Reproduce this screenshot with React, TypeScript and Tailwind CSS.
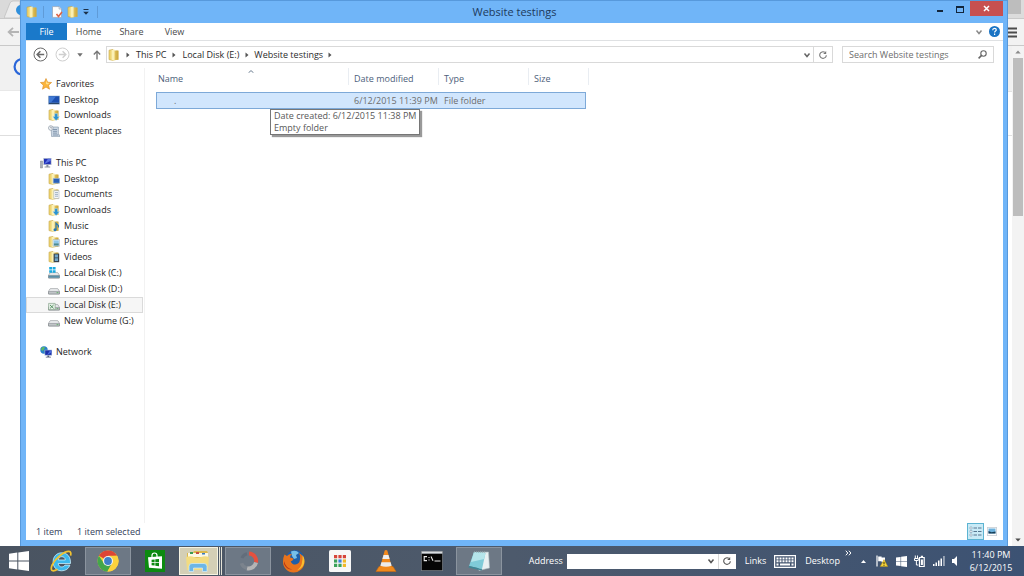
import React, { useState } from 'react';

type IconProps = { className?: string };

const FolderIcon: React.FC<{ className?: string; children?: React.ReactNode }> = ({ className = 'w-3 h-3', children }) => (
  <svg className={`shrink-0 ${className}`} viewBox="0 0 12 12">
    <path d="M1 1.2 5 .4v11L1 10.6z" fill="#efd573" stroke="#c5a544" strokeWidth=".6" />
    <path d="M5 1.4h4.6v9.4L5 11.6z" fill="#dcbc55" />
    <path d="M3.6 1 6.6.6v10.6l-3 .4z" fill="#fbf0b4" />
    <path d="M8.400 1.600h2.200v9.200H8.400z" fill="#cfab42" />
    {children}
  </svg>
);

const DiskIcon: React.FC<{ children?: React.ReactNode }> = ({ children }) => (
  <svg className="w-3 h-3 shrink-0" viewBox="0 0 12 12">
    <path d="M2.2 5.6h7.6L12 8.4v2.2q0 .8-.8.8H.8q-.8 0-.8-.8V8.4z" fill="#7f8488" />
    <path d="M2.4 6h7.2l1.8 2.3H.6z" fill="#e4e6e8" />
    <path d="M.6 8.6h10.8v2.1H.6z" fill="#c0c4c7" />
    <path d="M8.6 9.3h1.8v.8H8.6z" fill="#4fae58" />
    {children}
  </svg>
);

const StarIcon = () => (
  <svg className="w-3 h-3 shrink-0" viewBox="0 0 12 12">
    <path d="m6 .5 1.6 3.7 4 .3-3 2.7.9 4L6 9.1l-3.5 2.1.9-4-3-2.7 4-.3z" fill="#fbb53c" stroke="#d98a1e" strokeWidth=".6" />
    <path d="m6 2 1 2.8 2.5.2-2 1.6L6 6z" fill="#ffe08a" />
  </svg>
);

const DesktopIcon = () => (
  <svg className="w-3 h-3 shrink-0" viewBox="0 0 12 12">
    <path d="M.3 1.8h11.4v8.6H.3z" fill="#5d83b5" />
    <path d="M1 2.4h10v6.2H1z" fill="#1c4fb0" />
    <path d="M1 2.4h7L3 8.6H1z" fill="#3f78d4" />
    <path d="M1 9h10v.9H1z" fill="#24405f" />
  </svg>
);

const RecentIcon = () => (
  <svg className="w-3 h-3 shrink-0" viewBox="0 0 12 12">
    <path d="M3 2h7.4v8H12v1.6H3.6z" fill="#cbd7e4" stroke="#8293a6" strokeWidth=".6" />
    <path d="M5 4.5h4M5 6.3h4M5 8.1h4M5 10h5" stroke="#7086a0" strokeWidth=".8" />
    <circle cx="2.8" cy="3" r="2.3" fill="#f4f6f8" stroke="#8b97a5" strokeWidth=".7" />
    <path d="M2.8 1.6V3H4" fill="none" stroke="#6b7785" strokeWidth=".6" />
  </svg>
);

const PcIcon = () => (
  <svg className="w-3 h-3 shrink-0" viewBox="0 0 12 12">
    <path d="M.3 4h2.2v7H.3z" fill="#a9afb8" stroke="#70777f" strokeWidth=".4" />
    <path d="M3.2 1h8.4v7H3.2z" fill="#b9c2d3" />
    <path d="M4 1.8h6.8v5.4H4z" fill="#2130b4" />
    <path d="m4 7.2 4-5.4h2.8v2z" fill="#5c74e4" />
    <path d="M6.4 8h2v1.6h1.8v1H4.6v-1h1.8z" fill="#8c93a0" />
  </svg>
);

const NetworkIcon = () => (
  <svg className="w-3 h-3 shrink-0" viewBox="0 0 12 12">
    <circle cx="4" cy="4" r="3.7" fill="#2a82c9" />
    <path d="M2 1.2 5 1 4 3.4 2.4 5 1 3.6zM4.5 4.4l2 .2L5 7.2z" fill="#5dbb63" />
    <path d="M4.6 3.8H12v5.8H4.6z" fill="#9fb0d6" />
    <path d="M5.2 4.4h6.2v4.5H5.2z" fill="#1b2fa8" />
    <path d="m7 8.9 3-4.5h1.4v2z" fill="#4b6be0" />
    <path d="M7.4 9.6h1.8v1.2H11v.8H5.8v-.8h1.6z" fill="#555f78" />
  </svg>
);

const DownArrow = () => <path d="M6.6 4.6h3v3h2L8.1 11.8 4.6 7.6h2z" fill="#2b93d1" stroke="#e7f4fb" strokeWidth=".4" />;

const Chevron: React.FC<IconProps> = ({ className = '' }) => (
  <svg className={`w-2 h-2 shrink-0 ${className}`} viewBox="0 0 8 8">
    <path d="m1.5 2.5 2.5 3 2.5-3" fill="none" stroke="currentColor" strokeWidth="1.5" />
  </svg>
);

const Refresh: React.FC<IconProps> = ({ className = '' }) => (
  <svg className={`w-[10px] h-[10px] shrink-0 ${className}`} viewBox="0 0 10 10">
    <path d="M6.800 2.300A3.300 3.300 0 1 0 8.300 5.200" fill="none" stroke="currentColor" strokeWidth="1.100" />
    <path d="M8.200.900v3H5.200z" fill="currentColor" />
  </svg>
);

const RightTriangle = () => (
  <svg className="w-1 h-[6px] shrink-0" viewBox="0 0 4 6">
    <path d="M.5.5 3.5 3l-3 2.5z" fill="#555" />
  </svg>
);

type Place = { label: string; icon: React.ReactNode; root?: boolean; active?: boolean } | null;

const places: Place[] = [
  { label: 'Favorites', icon: <StarIcon />, root: true },
  { label: 'Desktop', icon: <DesktopIcon /> },
  { label: 'Downloads', icon: <FolderIcon><DownArrow /></FolderIcon> },
  { label: 'Recent places', icon: <RecentIcon /> },
  null,
  { label: 'This PC', icon: <PcIcon />, root: true },
  { label: 'Desktop', icon: <FolderIcon><path d="M5.2 5.4h6.5v4.8H5.2z" fill="#2b62b8" stroke="#a8c3e6" strokeWidth=".6" /></FolderIcon> },
  { label: 'Documents', icon: <FolderIcon><path d="M5.8 2.6H11v8H5.8z" fill="#f5f7f9" stroke="#9aa7b3" strokeWidth=".5" /><path d="M7 4.6h3M7 6.4h3M7 8.2h3" stroke="#8097ad" strokeWidth=".7" /></FolderIcon> },
  { label: 'Downloads', icon: <FolderIcon><DownArrow /></FolderIcon> },
  { label: 'Music', icon: <FolderIcon><path d="M8 10V3.2l2.4 2.4v2" fill="none" stroke="#2678b8" strokeWidth="1.2" /><circle cx="7" cy="9.8" r="1.5" fill="#2678b8" /></FolderIcon> },
  { label: 'Pictures', icon: <FolderIcon><path d="M5 3.6h6.6v6.6H5z" fill="#eaf3f9" stroke="#93a9ba" strokeWidth=".5" /><path d="M5.8 7.2h5v2.4h-5z" fill="#4c8a92" /><path d="M5.8 4.4h5v2.8h-5z" fill="#8ec7ea" /></FolderIcon> },
  { label: 'Videos', icon: <FolderIcon><path d="M5.6 2.6h5.6v8.6H5.6z" fill="#39424d" /><path d="M6.8 3.6h3.2v2.8H6.8zM6.8 7.2h3.2V10H6.8z" fill="#6fa6c9" /></FolderIcon> },
  { label: 'Local Disk (C:)', icon: <DiskIcon><path d="M1.2 0h2.9v2.6H1.2zM4.7 0h2.9v2.6H4.7zM1.2 3.2h2.9v2.6H1.2zM4.7 3.2h2.9v2.6H4.7z" fill="#18a9e0" /><path d="M.6 8.6h10.8v2.1H.6z" fill="#5a8fa8" /></DiskIcon> },
  { label: 'Local Disk (D:)', icon: <DiskIcon /> },
  { label: 'Local Disk (E:)', icon: <DiskIcon><path d="M.6 4.4h6.6v6.2H.6z" fill="#e4efe5" stroke="#7a9a80" strokeWidth=".6" /><path d="m2 6 3.6 3.4M5.6 6 2 9.4" stroke="#4b8a58" strokeWidth=".9" /></DiskIcon>, active: true },
  { label: 'New Volume (G:)', icon: <DiskIcon /> },
  null,
  { label: 'Network', icon: <NetworkIcon />, root: true },
];

const taskItems: { name: string; tile?: 'open' | 'active'; icon: React.ReactNode }[] = [
  {
    name: 'Internet Explorer',
    icon: (
      <svg className="w-6 h-6" viewBox="0 0 24 24">
        <path fillRule="evenodd" d="M21.500 14.500H9.200c.3 2.200 1.500 3.400 3.500 3.400 1.500 0 2.600-.6 3.200-1.800h5c-1.200 3.600-4.200 5.700-8.200 5.700-5.200 0-8.600-3.600-8.600-8.900C4.100 7.500 7.700 3.800 12.700 3.800c5.600 0 9.100 4 8.800 10.700zM9.300 11h7c-.2-2.200-1.500-3.300-3.500-3.300S9.600 8.800 9.300 11z" fill="#3db9ee" stroke="#c8effc" strokeWidth=".8" />
        <path d="M21.500 6.600c.8-2.200.3-4-1.500-4.200C15.500 2 6.300 9.200 3.200 15.800 1.600 19.300 2 21.800 4.200 21.800c1.300 0 2.800-.6 4.300-1.600" fill="none" stroke="#f3c330" strokeWidth="1.700" />
      </svg>
    ),
  },
  {
    name: 'Chrome',
    tile: 'open',
    icon: (
      <svg className="w-[22px] h-[22px]" viewBox="0 0 22 22">
        <circle cx="11" cy="11" r="10.500" fill="#fbd23c" />
        <path d="M11 11 1.900 5.700A10.500 10.500 0 0 1 20.100 5.700L11 6.300z" fill="#dd4536" />
        <path d="M1.900 5.700A10.500 10.500 0 0 0 10.400 21.500L15 13.400 7 13.400z" fill="#43a64b" />
        <path d="M20.100 5.700H11v5.300l4 2.500-4.600 8A10.500 10.500 0 0 0 20.100 5.700z" fill="#fbd23c" />
        <circle cx="11" cy="11" r="5" fill="#f4f4f4" />
        <circle cx="11" cy="11" r="3.900" fill="#3e7fc9" />
      </svg>
    ),
  },
  {
    name: 'Store',
    icon: (
      <svg className="w-5 h-[22px]" viewBox="0 0 20 22">
        <path d="M0 0h20v22H0z" fill="#0c8a10" />
        <path d="M7 7V5.500Q7 3 9.500 3T12 5.500V7" fill="none" stroke="#fff" strokeWidth="1.200" />
        <path d="m3 7.200 14-1v12.600L4 17.800z" fill="#fff" />
        <path d="m6.600 9.700 3-.3v2.800h-3zM10.300 9.300l3.700-.4v3.300h-3.700zM6.600 12.900h3v2.700l-3-.3zM10.300 12.900H14v3.300l-3.700-.5z" fill="#0c8a10" />
      </svg>
    ),
  },
  {
    name: 'File Explorer',
    tile: 'active',
    icon: (
      <svg className="w-[26px] h-[22px]" viewBox="0 0 26 22">
        <path d="M2 3h6l1-2h13l1 2v17H2z" fill="#dcb94c" />
        <path d="M3 3h20v4H3z" fill="#fbf8e4" />
        <path d="M5 2h3v2H5z" fill="#3b9b52" />
        <path d="M11 2h3v2h-3z" fill="#c74e40" />
        <path d="M17 3h3v1.500h-3z" fill="#3b7cc4" />
        <path d="M1 7q5-1.500 8 0t7 0 8 0l-1 13H2z" fill="#f3dc80" />
        <path d="M4 21.500v-5q0-3 3-3h12q3 0 3 3v5h-4.500V18h-9v3.500z" fill="#6db6e6" stroke="#d1ecfa" strokeWidth=".7" />
      </svg>
    ),
  },
  {
    name: 'Screen recorder',
    tile: 'open',
    icon: (
      <svg className="w-[22px] h-[22px]" viewBox="0 0 22 22">
        <path d="M12 3.500a7.500 7.500 0 0 1 7 9" fill="none" stroke="#e5513f" strokeWidth="4" />
        <path d="M19 12.500a7.500 7.500 0 0 1-9 5.700" fill="none" stroke="#b4b4b5" strokeWidth="4" />
        <path d="M10 18.200a7.500 7.500 0 0 1-5.500-5" fill="none" stroke="#7b838d" strokeWidth="3.500" />
        <path d="M5 8a7.500 7.500 0 0 1 5-4.300" fill="none" stroke="#626d7b" strokeWidth="3" />
      </svg>
    ),
  },
  {
    name: 'Firefox',
    icon: (
      <svg className="w-6 h-6" viewBox="0 0 24 24">
        <circle cx="13" cy="10.500" r="9.500" fill="#1f5ea8" />
        <path d="M9 2.500q5-2 8 1.500l-3 2 1 3-3 1-2-3z" fill="#76bfe9" />
        <path d="M2.500 5.500 5 7q2-2.300 5-2-2.200 1.800-2 3.500 2.500.2 3.500 1.500-.6 1.800-2.800 2.400 1.300 3.100 4.500 3.100 4.300-.5 4.800-5 1-3-1-6.500 5.500 3 5.500 9A10.700 10.700 0 0 1 1 12.500q0-3.800 1.500-7z" fill="#e8731c" />
        <path d="M20.500 6q2.800 4 1.600 8.500T15 21.500q5-4 5-8.500.8-3 .5-7z" fill="#f8bd2e" />
        <path d="M2 12q1.500 7 8.500 8.600Q4 20.500 2 15z" fill="#b83413" />
      </svg>
    ),
  },
  {
    name: 'App Launcher',
    icon: (
      <svg className="w-[22px] h-[22px]" viewBox="0 0 22 22">
        <rect width="22" height="22" rx="1.500" fill="#f7f7f7" />
        <path d="M5 5h3.200v3.200H5zM9.400 5h3.200v3.200H9.400zM13.800 5H17v3.200h-3.200z" fill="#d6453b" />
        <path d="M5 9.400h3.200v3.200H5z" fill="#3ba15a" />
        <path d="M9.400 9.400h3.200v3.200H9.400z" fill="#3e7de0" />
        <path d="M13.800 9.400H17v3.200h-3.200z" fill="#f0b929" />
        <path d="M5 13.800h3.200V17H5zM9.400 13.800h3.200V17H9.400z" fill="#3ba15a" />
        <path d="M13.800 13.800H17V17h-3.200z" fill="#f0b929" />
      </svg>
    ),
  },
  {
    name: 'VLC',
    icon: (
      <svg className="w-[22px] h-6" viewBox="0 0 22 24">
        <path d="M4 17.500h14l3 5H1z" fill="#f08a1c" stroke="#c96a10" strokeWidth=".6" />
        <path d="M9.700 1.500q1.300-.8 2.600 0L17 18.500q-6 2.500-12 0z" fill="#f28a1d" />
        <path d="M8.500 6h5l1.100 4H7.400z" fill="#eee" />
        <path d="M6.400 13.200h9.200l1 3.500q-5.600 1.900-11.200 0z" fill="#ececec" />
      </svg>
    ),
  },
  {
    name: 'Command Prompt',
    icon: (
      <svg className="w-[22px] h-5" viewBox="0 0 22 20">
        <path d="M0 0h22v20H0z" fill="#777d84" />
        <path d="M.8 2.800h20.400v16.400H.8z" fill="#050505" />
        <path d="M.8.600h20.400v1.800H.8z" fill="#d9dde1" />
        <path d="M6 5.600H3.200v4H6M8 6v1M8 8.600v1M10 5.400l2 4.400M13.500 10h6" fill="none" stroke="#e8e8e8" strokeWidth="1.100" />
      </svg>
    ),
  },
  {
    name: 'Notepad',
    tile: 'open',
    icon: (
      <svg className="w-6 h-6" viewBox="0 0 24 24">
        <path d="m7 3.500 14.500-.5 1 16L12 21.500z" fill="#e8f0f2" stroke="#a7babf" strokeWidth=".6" />
        <path d="M7 3 18.500 4 15 20 2 17z" fill="#7fcbd8" />
        <path d="M7 3 18.500 4l-1.400 6L4 13z" fill="#b5e5eb" />
        <path d="m2 17 13 3-.3 1.500L1.500 18.500z" fill="#3d8796" />
        <path d="M7 2.800h11.700" stroke="#8fa3a8" strokeWidth="1.200" strokeDasharray="1 1" />
      </svg>
    ),
  },
];

const WindowsLogo: React.FC<IconProps> = ({ className }) => (
  <svg className={className} viewBox="0 0 20 20">
    <path d="m0 2.800 8.300-1.200v7.900H0zM9.300 1.500 20 0v9.500H9.300zM0 10.500h8.300v7.900L0 17.200zM9.300 10.500H20V20L9.300 18.500z" fill="#fff" />
  </svg>
);

const TitleBar = () => (
  <header className="grid h-[22px] grid-cols-[1fr_auto_1fr] items-center">
    <div className="flex items-center">
      <FolderIcon />
      <span className="mr-[7px] ml-[5px] h-3 w-px bg-[#5f9bd8]" />
      <button aria-label="Properties" className="mr-1">
        <svg className="h-3 w-3" viewBox="0 0 12 12">
          <path d="M1.500.6H8l2.500 2.500v8.300h-9z" fill="#fdfdfd" stroke="#8d99a8" strokeWidth=".6" />
          <path d="M8 .6v2.500h2.500" fill="#d9dfe6" stroke="#8d99a8" strokeWidth=".5" />
          <path d="m5.500 8 2 2.400L11 6" fill="none" stroke="#dc6245" strokeWidth="1.600" />
        </svg>
      </button>
      <button aria-label="New folder" className="mr-[3px]"><FolderIcon /></button>
      <button aria-label="Customize Quick Access Toolbar">
        <svg className="h-2 w-2" viewBox="0 0 8 8">
          <path d="M1.500 1.500h5" stroke="#1c3047" />
          <path d="M1.200 3.800h5.600L4 6.800z" fill="#1c3047" />
        </svg>
      </button>
      <span className="ml-[7px] h-3 w-px bg-[#5f9bd8]" />
    </div>
    <h1 className="text-[11px] text-[#1d3a5c]">Website testings</h1>
    <div className="flex h-full items-start justify-end">
      <button aria-label="Minimize" className="flex h-4 w-5 items-center justify-center">
        <span className="mt-1 h-[2px] w-[6px] bg-[#12263c]" />
      </button>
      <button aria-label="Maximize" className="flex h-4 w-5 items-center justify-center">
        <span className="h-[7px] w-2 border border-t-2 border-[#12263c]" />
      </button>
      <button aria-label="Close" className="flex h-[15px] w-[33px] items-center justify-center bg-[#c75050]">
        <svg className="h-[7px] w-[7px]" viewBox="0 0 7 7">
          <path d="m1 1 5 5m0-5L1 6" stroke="#fff" strokeWidth="1.500" />
        </svg>
      </button>
    </div>
  </header>
);

const Ribbon = () => (
  <div className="flex h-[18px] items-center border-b border-[#dfe1e3] text-[#4a4a4a]">
    <button className="h-full w-[41px] bg-[#1a79ca] text-white">File</button>
    <button className="w-[43px]">Home</button>
    <button className="w-[43px]">Share</button>
    <button className="w-[43px]">View</button>
    <button aria-label="Expand the Ribbon" className="mr-[6px] ml-auto text-[#8a8a8a]"><Chevron /></button>
    <button aria-label="Help" className="mr-[3px]">
      <svg className="h-[11px] w-[11px]" viewBox="0 0 11 11">
        <circle cx="5.500" cy="5.500" r="5.500" fill="#1a74c4" />
        <path d="M3.700 4.200q0-1.900 1.800-1.900t1.800 1.600c0 1.200-1.700 1.200-1.700 2.600M5.600 7.600v1.300" fill="none" stroke="#fff" strokeWidth="1.200" />
      </svg>
    </button>
  </div>
);

const AddressBar = () => (
  <div className="flex h-[27px] items-center pr-[9px] pl-[7px]">
    <button aria-label="Back" className="mr-[7px]">
      <svg className="h-[15px] w-[15px]" viewBox="0 0 15 15" fill="none" stroke="#6a6a6a">
        <circle cx="7.500" cy="7.500" r="6.500" />
        <path d="M11.200 7.500H4.400m3-3.200L4.200 7.500l3.200 3.200" strokeWidth="1.600" />
      </svg>
    </button>
    <button aria-label="Forward" className="mr-[7px]">
      <svg className="h-[15px] w-[15px]" viewBox="0 0 15 15" fill="none" stroke="#cfcfcf">
        <circle cx="7.500" cy="7.500" r="6.500" />
        <path d="M3.800 7.500h6.800m-3-3.200 3.200 3.200-3.200 3.200" strokeWidth="1.400" />
      </svg>
    </button>
    <button aria-label="Recent locations" className="mr-[10px]">
      <svg className="h-1 w-[6px]" viewBox="0 0 6 4"><path d="M.3.300h5.400L3 3.700z" fill="#707070" /></svg>
    </button>
    <button aria-label="Up" className="mr-[5px]">
      <svg className="h-[10px] w-2" viewBox="0 0 8 10" fill="none" stroke="#777" strokeWidth="1.400">
        <path d="M4 9.500V1.500M.8 4.600 4 1.300l3.200 3.300" />
      </svg>
    </button>
    <nav className="flex h-[17px] flex-1 items-center border border-[#d9d9d9] text-[#2b2b2b]">
      <FolderIcon className="mr-[6px] ml-[1px] h-3 w-3" />
      <RightTriangle />
      <a href="#pc" className="mx-[6px]">This PC</a>
      <RightTriangle />
      <a href="#e" className="mx-[6px]">Local Disk (E:)</a>
      <RightTriangle />
      <a href="#testings" className="mx-[5px]">Website testings</a>
      <RightTriangle />
      <button aria-label="Previous locations" className="mr-[2px] ml-auto text-[#666]"><Chevron /></button>
      <button aria-label="Refresh" className="flex h-full w-[19px] items-center justify-center border-l border-[#d9d9d9] text-[#777]"><Refresh /></button>
    </nav>
    <label className="ml-[9px] flex h-[17px] w-[152px] items-center border border-[#d9d9d9] px-[6px]">
      <input aria-label="Search" placeholder="Search Website testings" className="min-w-0 flex-1 outline-none placeholder:text-[#6d6d6d]" />
      <svg className="h-[9px] w-[9px]" viewBox="0 0 9 9" fill="none" stroke="#666">
        <circle cx="5.500" cy="3.500" r="2.700" strokeWidth="1.100" />
        <path d="M3.600 5.400.6 8.400" strokeWidth="1.500" />
      </svg>
    </label>
  </div>
);

const Sidebar = () => (
  <aside className="w-[119px] shrink-0 border-r border-[#f2f2f2] pt-2 pr-px">
    <ul className="grid h-[284px] auto-rows-fr text-[#1e1e1e]">
      {places.map((place, i) =>
        place ? (
          <li key={i} className={`flex border ${place.active ? 'border-[#dadada] bg-[#f6f6f6]' : 'border-transparent'}`}>
            <a href="#place" className={`flex items-center gap-1 whitespace-nowrap ${place.root ? 'pl-[13px]' : 'pl-[21px]'}`}>
              {place.icon}
              {place.label}
            </a>
          </li>
        ) : (
          <li key={i} aria-hidden="true" />
        )
      )}
    </ul>
  </aside>
);

const FileTable = () => (
  <main className="relative flex-1 pl-[11px]">
    <table className="w-[433px] table-fixed border-separate border-spacing-0 text-left">
      <colgroup>
        <col className="w-[193px]" />
        <col className="w-[90px]" />
        <col className="w-[90px]" />
        <col className="w-[57px]" />
        <col className="w-[3px]" />
      </colgroup>
      <thead className="text-[#4c607a]">
        <tr className="h-[17px]">
          <th className="relative border-r border-[#e9edf2] p-0 pt-[5px] pl-[2px] font-normal">
            Name
            <svg className="absolute top-[2px] left-[92px] h-[3px] w-[6px]" viewBox="0 0 6 3"><path d="M.5 2.800 3 .6l2.500 2.200" fill="none" stroke="#6d7f92" /></svg>
          </th>
          <th className="border-r border-[#e9edf2] p-0 pt-[5px] pl-[5px] font-normal">Date modified</th>
          <th className="border-r border-[#e9edf2] p-0 pt-[5px] pl-[5px] font-normal">Type</th>
          <th colSpan={2} className="border-r border-[#e9edf2] p-0 pt-[5px] pl-[5px] font-normal">Size</th>
        </tr>
      </thead>
      <tbody className="text-[#6d6d6d]">
        <tr className="h-[7px]" aria-hidden="true" />
        <tr className="h-[17px]">
          <td className="border-y border-l border-[#7da9d8] bg-[#d1e6fd] p-0 pl-[17px]">.</td>
          <td className="border-y border-[#7da9d8] bg-[#d1e6fd] p-0 pl-[5px] whitespace-nowrap">6/12/2015 11:39 PM</td>
          <td className="border-y border-[#7da9d8] bg-[#d1e6fd] p-0 pl-[5px]">File folder</td>
          <td className="border-y border-r border-[#7da9d8] bg-[#d1e6fd] p-0" />
        </tr>
      </tbody>
    </table>
    <div role="tooltip" className="absolute top-[41px] left-[125px] border border-[#767676] bg-white px-[3px] text-[#575757] shadow-[2px_2px_1px_#999] whitespace-nowrap">
      <p>Date created: 6/12/2015 11:38 PM</p>
      <p>Empty folder</p>
    </div>
  </main>
);

const StatusBar = () => (
  <footer className="flex h-[17px] items-center pr-[3px] pl-[10px] text-[#33415a]">
    <span className="w-[41px]">1 item</span>
    <span>1 item selected</span>
    <button aria-label="Details view" className="ml-auto flex h-[17px] w-[17px] items-center justify-center border border-[#5cb4d2] bg-[#c9eaf6]">
      <svg className="h-[11px] w-[13px]" viewBox="0 0 13 11">
        <path d="M1 1h2v2H1zM1 4.500h2v2H1zM1 8h2v2H1z" fill="#fff" stroke="#6c8ba3" strokeWidth=".5" />
        <path d="M4.500 2H8M9 2h3.500M4.500 5.500H8M9 5.500h3.500M4.500 9H8M9 9h3.500" stroke="#56758f" />
      </svg>
    </button>
    <button aria-label="Large icons view" className="flex h-[17px] w-4 items-center justify-center">
      <svg className="h-[9px] w-[10px]" viewBox="0 0 10 9">
        <path d="M.3.300h9.400v8.400H.3z" fill="#fff" stroke="#a1abb5" strokeWidth=".6" />
        <path d="M1.500 1.500h7v5h-7z" fill="#6bb1dd" />
        <path d="m1.500 4 3 1.200 4-.8v2.100h-7z" fill="#183f58" />
      </svg>
    </button>
  </footer>
);

const Taskbar = () => {
  const [address, setAddress] = useState('');

  return (
    <footer className="flex h-[30px] shrink-0 items-center bg-linear-to-r from-[#4a5461] via-[#4d5a6c] to-[#3c5273] text-white">
      <button aria-label="Start" className="flex h-full w-[38px] items-center justify-center">
        <WindowsLogo className="h-5 w-5" />
      </button>
      <div className="flex h-full w-[465px] shrink-0 py-px">
        {taskItems.map((item) => (
          <button
            key={item.name}
            aria-label={item.name}
            className={`mx-px flex min-w-0 flex-1 items-center justify-center ${item.tile === 'open' ? 'border border-[#8b949f] bg-[#6d7885]' : ''}`}
          >
            {item.tile === 'active' ? (
              <span className="flex h-full w-full gap-px">
                <span className="flex w-[39px] items-center justify-center border border-[#f6f3e2] bg-[#d4cfb6]">{item.icon}</span>
                <span className="w-px bg-[#e4e2d6]" />
                <span className="w-px bg-[#e4e2d6]" />
              </span>
            ) : (
              item.icon
            )}
          </button>
        ))}
      </div>
      <div className="ml-auto flex h-full items-center">
        <label htmlFor="address" className="mr-1">Address</label>
        <div className="flex h-[15px] w-[169px] items-center bg-white text-[#555]">
          <input id="address" value={address} onChange={(e) => setAddress(e.target.value)} className="min-w-0 flex-1 px-1 outline-none" />
          <button aria-label="Address history" className="mr-[3px]"><Chevron /></button>
          <button aria-label="Go" className="flex h-full w-[18px] items-center justify-center border-l border-[#d9d9d9]"><Refresh /></button>
        </div>
        <span className="mr-2 ml-[9px]">Links</span>
        <button aria-label="Touch keyboard" className="mr-[9px]">
          <svg className="h-[13px] w-[22px]" viewBox="0 0 22 13">
            <path d="M.6.600h20.800v11.800H.6z" fill="none" stroke="#fff" strokeWidth="1.200" />
            <path d="M2.500 3.500h17M2.500 6.300h17" stroke="#fff" strokeWidth="1.900" strokeDasharray="2 1" />
            <path d="M2.500 9.500h2M6 9.500h10M17.500 9.500h2" stroke="#fff" strokeWidth="1.800" />
          </svg>
        </button>
        <span>Desktop</span>
        <button aria-label="More toolbars" className="mr-[9px] ml-[5px] self-start pt-1">
          <svg className="h-[6px] w-[7px]" viewBox="0 0 7 6" fill="none" stroke="#fff"><path d="m.8.700 2 2.300-2 2.300M3.900.700l2 2.300-2 2.300" /></svg>
        </button>
        <button aria-label="Show hidden icons" className="mr-[10px]">
          <svg className="h-[3px] w-[5px]" viewBox="0 0 5 3"><path d="M2.500 0 5 3H0z" fill="#fff" /></svg>
        </button>
        <div className="flex w-[82px] items-center justify-between">
          <svg className="h-3 w-3" viewBox="0 0 12 12">
            <path d="M1 .5v11" stroke="#fff" strokeWidth="1.200" />
            <path d="M2.200 1.500h3.400v1H9v4.800H5.600v-1H2.200z" fill="#fff" />
            <path d="m8 4.600 3.800 7H4.200z" fill="#f5d33c" stroke="#b49113" strokeWidth=".5" />
            <path d="M8 7v2.300M8 10v.8" stroke="#3c3208" />
          </svg>
          <WindowsLogo className="h-[11px] w-[11px]" />
          <svg className="h-3 w-[11px]" viewBox="0 0 11 12" fill="none" stroke="#fff">
            <path d="M5.500 2.500h4.700v9H5.500zM6.800 1.300H9" strokeWidth="1.200" />
            <path d="M7.900 4.500v5.500" strokeWidth="2" />
            <path d="M1.300.5v2.500M3.500.5v2.500M.5 3.500h3.800v2H.5zM2.400 5.500v4.500h2" />
          </svg>
          <svg className="h-[10px] w-3" viewBox="0 0 12 10" fill="#fff">
            <path d="M0 8h1.500v2H0zM2.500 6.500H4V10H2.500zM5 4.500h1.500V10H5zM7.500 2.500H9V10H7.500z" />
            <path d="M10.200 0h1.500v10h-1.500z" opacity=".6" />
          </svg>
          <svg className="h-3 w-[6px]" viewBox="0 0 6 12"><path d="M0 4h2L5 1v10L2 8H0z" fill="#fff" /></svg>
        </div>
        <time className="w-[66px] text-center leading-[13px]">11:40 PM<br />6/12/2015</time>
      </div>
    </footer>
  );
};

// the part of the browser that shows on the left of the explorer window
const BrowserLeft = () => (
  <div className="flex w-5 shrink-0 flex-col overflow-hidden bg-white">
    <div className="flex h-[18px] items-center justify-end bg-[#dadada]">
      <svg className="h-[18px] w-4" viewBox="0 0 16 18">
        <path d="M0 18 6 3q1-2 3-2h7v17z" fill="#ececec" stroke="#bcbcbc" strokeWidth=".7" />
        <circle cx="17" cy="10" r="5" fill="#2f8fdc" />
      </svg>
    </div>
    <div className="flex h-7 items-center border-y border-[#c9c9c9] bg-[#f2f2f2] pl-[7px]">
      <svg className="h-[10px] w-3 shrink-0" viewBox="0 0 12 10" fill="none" stroke="#b5b5b5" strokeWidth="1.800"><path d="M12 5H2M6 .8 1.600 5 6 9.200" /></svg>
    </div>
    <div className="flex h-[45px] items-center justify-end border-b border-[#e8e8e8] bg-[#f1f1f1]">
      <svg className="h-5 w-2" viewBox="0 0 8 20"><path d="M9.500 1A7.800 7.800 0 0 0 9.500 16.500" fill="none" stroke="#2a66d9" strokeWidth="2.200" /></svg>
    </div>
    <div className="h-[45px] border-b border-[#dedede]" />
  </div>
);

const BrowserRight = () => (
  <div className="flex w-4 shrink-0 flex-col bg-white">
    <div className="h-[18px] border-r-[3px] border-b-4 border-[#dcdcdc] bg-[#bdbdbd]" />
    <div className="flex h-7 items-center border-y border-[#c9c9c9] bg-[#f2f2f2]">
      <svg className="h-[11px] w-[9px]" viewBox="0 0 9 11"><path d="M0 1.500h9M0 5.500h9M0 9.500h9" stroke="#4b4b4b" strokeWidth="2" /></svg>
    </div>
    <div className="flex flex-1">
      <div className="w-1"><div className="h-[45px] bg-[#f1f1f1]" /><div className="h-[45px] border-y border-[#e2e2e2]" /></div>
      <div className="flex flex-1 flex-col items-center bg-[#f3f3f3]">
        <svg className="my-1 h-1 w-[6px]" viewBox="0 0 6 4"><path d="M3 .5 5.700 3.500H.3z" fill="#8a8a8a" /></svg>
        <div className="h-[158px] w-[10px] bg-[#bdbdbd]" />
        <svg className="mt-auto mb-1 h-1 w-[6px]" viewBox="0 0 6 4"><path d="M3 3.500 5.700.5H.3z" fill="#4b4b4b" /></svg>
      </div>
    </div>
  </div>
);

export default function App() {
  return (
    <div className="flex h-screen flex-col overflow-hidden bg-white font-['Open_Sans','Noto_Sans',sans-serif] text-[9px] leading-[12px]">
      <div className="flex min-h-0 flex-1">
        <BrowserLeft />
        <section className="flex min-w-0 flex-1 flex-col border-x border-t border-[#5799dc] bg-[#70b5f8] pr-1 pb-[6px] pl-[5px]">
          <TitleBar />
          <div className="flex min-h-0 flex-1 flex-col bg-white">
            <Ribbon />
            <AddressBar />
            <div className="flex min-h-0 flex-1">
              <Sidebar />
              <FileTable />
            </div>
            <StatusBar />
          </div>
        </section>
        <BrowserRight />
      </div>
      <Taskbar />
    </div>
  );
}
